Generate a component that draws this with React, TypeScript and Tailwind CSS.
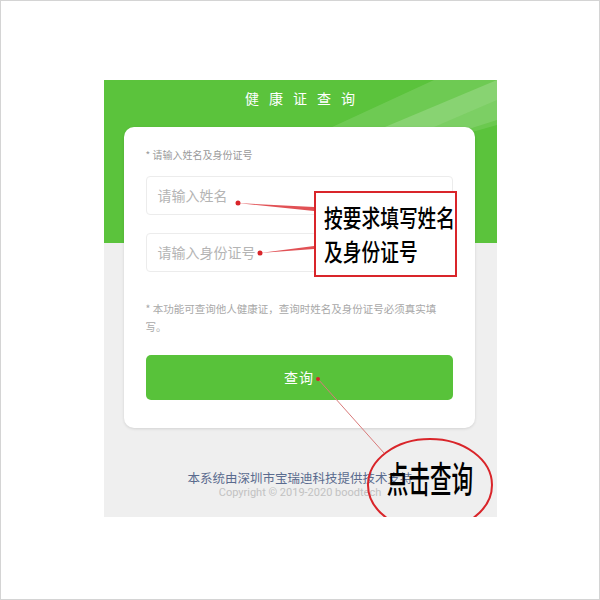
const cjk = { fontFamily: '"Noto Sans CJK SC", "Noto Sans", sans-serif' };

export default function App() {
  return (
    <div className="w-[600px] h-[600px] bg-white border border-[#d4d4d4] flex justify-center pt-[79px]" style={cjk}>
      <div className="relative w-[393px] h-[437px] bg-[#efefef] overflow-hidden">
        {/* green header */}
        <div className="absolute left-0 top-0 w-full h-[163px] bg-[#5bc33c] overflow-hidden">
          <svg className="absolute inset-0" width="393" height="163">
            <polygon points="250,60 393,0 393,20 300,60" fill="#ffffff" opacity="0.18" />
            <polygon points="200,60 330,0 393,0 393,40 330,60" fill="#ffffff" opacity="0.12" />
            <polygon points="300,60 393,20 393,45 340,60" fill="#ffffff" opacity="0.1" />
          </svg>
        </div>

        <div className="relative flex flex-col">
          <div className="h-[28px] flex items-end justify-center">
            <span className="text-[14px] leading-[20px] text-white tracking-[10px] pl-[10px]">健康证查询</span>
          </div>

          {/* card */}
          <div className="mt-[19px] mx-[20px] w-[351px] bg-white rounded-[10px] shadow-[0_1px_3px_rgba(0,0,0,0.12)] px-[22px] pt-[21px] pb-[28px]">
            <div className="text-[10px] leading-[14px] text-[#9a9a9a]">* 请输入姓名及身份证号</div>
            <div className="mt-[14px] h-[39px] rounded-[4px] border border-[#ececec] flex items-center px-[11px] text-[14px] text-[#b4b4b4]">
              请输入姓名
            </div>
            <div className="mt-[18px] h-[39px] rounded-[4px] border border-[#ececec] flex items-center px-[11px] text-[14px] text-[#b4b4b4]">
              请输入身份证号
            </div>
            <div className="mt-[28px] text-[10.5px] leading-[18px] text-[#a8a8a8] pr-[10px]">
              * 本功能可查询他人健康证，查询时姓名及身份证号必须真实填写。
            </div>
            <div className="mt-[19px] h-[45px] rounded-[5px] bg-[#58c23a] flex items-center justify-center text-[14px] text-white tracking-[1px]">
              查询
            </div>
          </div>

          {/* footer */}
          <div className="mt-[42px] flex flex-col items-center">
            <div className="text-[12.5px] leading-[16px] text-[#5a6b8e]">本系统由深圳市宝瑞迪科技提供技术支持</div>
            <div className="text-[11px] leading-[14px] text-[#c2c2c2]" style={{ fontFamily: 'Roboto, "Noto Sans", sans-serif' }}>
              Copyright © 2019-2020 boodtech
            </div>
          </div>
        </div>

        {/* annotation lines */}
        <svg className="absolute inset-0 pointer-events-none" width="393" height="437">
          <polygon points="210,131 133,123 210,127" fill="#d9252a" opacity="0.8" />
          <circle cx="134" cy="123" r="2.5" fill="#d9252a" />
          <polygon points="210,166 156,173 210,169" fill="#d9252a" opacity="0.8" />
          <circle cx="156" cy="173" r="2.5" fill="#d9252a" />
          <line x1="214" y1="299" x2="280" y2="373" stroke="#d97a7a" strokeWidth="1" />
          <circle cx="214" cy="299" r="2" fill="#d9252a" />
          <ellipse cx="326" cy="405" rx="62" ry="46" fill="none" stroke="#d9252a" strokeWidth="2" />
        </svg>

        {/* red box note */}
        <div className="absolute left-[210px] top-[111px] w-[143px] h-[86px] bg-white border-2 border-[#d9252a] flex flex-col justify-center pl-[8px]">
          <div className="text-[24px] leading-[34px] font-medium text-black origin-left scale-x-[0.78] whitespace-nowrap">按要求填写姓名</div>
          <div className="text-[24px] leading-[34px] font-medium text-black origin-left scale-x-[0.78] whitespace-nowrap">及身份证号</div>
        </div>

        {/* ellipse note */}
        <div className="absolute left-[266px] top-[375px] w-[120px] flex justify-center">
          <span className="text-[36px] leading-[44px] font-medium text-black scale-x-[0.6] whitespace-nowrap">点击查询</span>
        </div>
      </div>
    </div>
  );
}
